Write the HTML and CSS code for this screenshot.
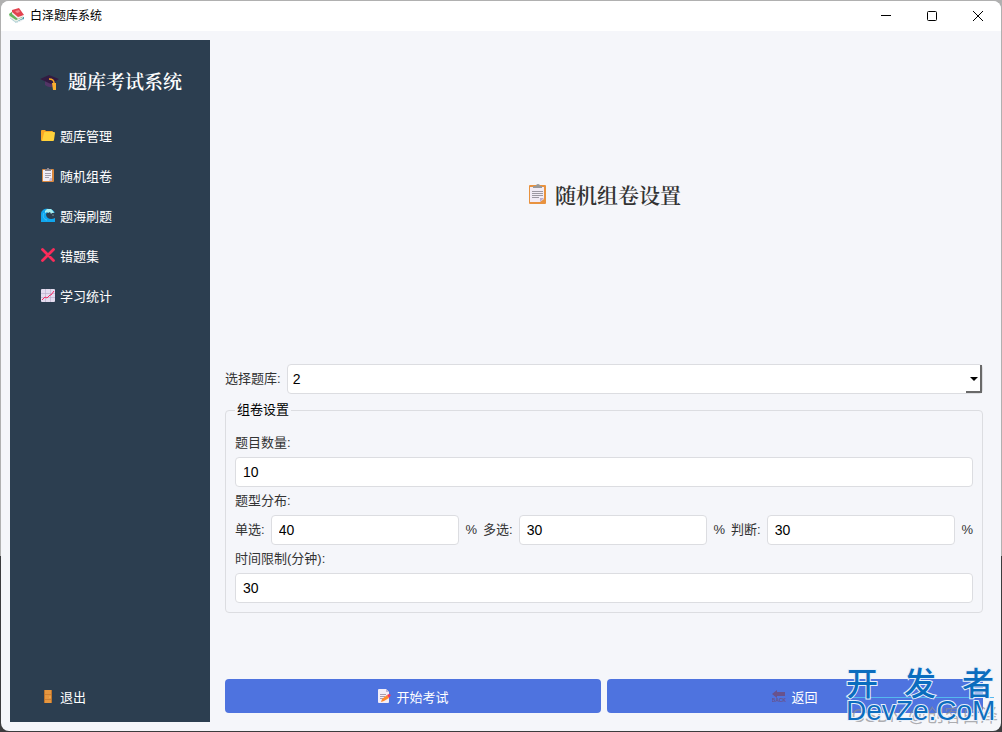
FILE: index.html
```html
<!DOCTYPE html>
<html lang="zh-CN">
<head>
    <meta charset="UTF-8">
    <meta name="viewport" content="width=device-width, initial-scale=1.0">
    <title>白泽题库系统</title>
    <link rel="stylesheet" href="styles.css">
</head>
<body>
    <div class="window">
        <header class="titlebar">
            <svg class="app-icon" viewBox="0 0 16 16">
                <path d="M1 10l6 5 8-4v-2L8 8z" fill="#4c9fae"/>
                <path d="M2 11l5 3 7-3-1 2-6 2z" fill="#e8eef0"/>
                <path d="M0 6l4-3 10 6-7 4-6-4z" fill="#63b45c"/>
                <path d="M1 8l6 4 7-3v1l-7 4-6-4z" fill="#e9efe6"/>
                <path d="M3 2l7-2 5 7-6 3-6-5z" fill="#e2434f"/>
                <path d="M3 4l6 5 6-2v1l-6 3-6-5z" fill="#f7e9ea"/>
                <path d="M6 3l4-1 1 2-3 1z" fill="#f4848c"/>
            </svg>
            <span class="titlebar-text">白泽题库系统</span>
            <div class="window-controls">
                <button type="button" aria-label="最小化">
                    <svg viewBox="0 0 12 12"><path d="M1 5.500h10" /></svg>
                </button>
                <button type="button" aria-label="最大化">
                    <svg viewBox="0 0 12 12"><rect x="1.5" y="1.5" width="9" height="9" rx="1" /></svg>
                </button>
                <button type="button" aria-label="关闭">
                    <svg viewBox="0 0 12 12"><path d="M1 1l10 10M11 1L1 11" /></svg>
                </button>
            </div>
        </header>

        <div class="layout">
            <aside class="sidebar">
                <h1>
                    <svg class="icon-large" viewBox="0 0 20 20">
                        <path d="M5 9v5c2 2 7 3 10 1V9z" fill="#533566"/>
                        <path d="M0 8l9-4 10 4-8 5z" fill="#321b41"/>
                        <path d="M9 8c3 0 5 1 5 4v5" fill="none" stroke="#f5a623" stroke-width="1.5"/>
                        <path d="M12 12h4v7h-3z" fill="#f9b02e"/>
                    </svg>
                    题库考试系统
                </h1>
                <nav>
                    <button type="button" class="nav-item">
                        <svg class="icon" viewBox="0 0 14 14">
                            <path d="M0 3q0-1 1-1h3l1 1h6q1 0 1 1v9H1q-1 0-1-1z" fill="#f9a825"/>
                            <path d="M3 5q0-1 1-1h9q1 0 1 1l-1 7q0 1-1 1H1z" fill="#ffd23b"/>
                        </svg>
                        题库管理
                    </button>
                    <button type="button" class="nav-item">
                        <svg class="icon" viewBox="0 0 14 14">
                            <rect x="1" y="1" width="12" height="13" rx="1" fill="#d9883f"/>
                            <path d="M2 2h9v8l-2 3H2z" fill="#f1ecf6"/>
                            <path d="M11 10v3H8l1-3z" fill="#c7bbd6"/>
                            <path d="M4 1h2V0h2v1h2v2H4z" fill="#8c8690"/>
                            <path d="M4 5.500h6M4 7.500h6M4 9.500h4" stroke="#908a99" stroke-width=".8"/>
                        </svg>
                        随机组卷
                    </button>
                    <button type="button" class="nav-item">
                        <svg class="icon" viewBox="0 0 14 14">
                            <path d="M0 14V6c0-4 4-6 8-5 3 0 5 2 6 4l-3-1C7 3 5 5 5 7c1 4 5 5 9 3v4z" fill="#10a6ee"/>
                            <path d="M4 3l2-2 4 0 2 2 1 2-2 0-1 1-1-2-2 1-1-1-2 1z" fill="#a8eeef"/>
                            <path d="M3 5c-2 3 0 7 3 7" fill="none" stroke="#46c3f5"/>
                            <circle cx="12" cy="7" r=".6" fill="#bcecf0"/>
                        </svg>
                        题海刷题
                    </button>
                    <button type="button" class="nav-item">
                        <svg class="icon" viewBox="0 0 14 14">
                            <path d="M1.500 1.500l11 11M12.500 1.500l-11 11" stroke="#fb2c5a" stroke-width="2.800" stroke-linecap="round"/>
                        </svg>
                        错题集
                    </button>
                    <button type="button" class="nav-item">
                        <svg class="icon" viewBox="0 0 14 14">
                            <rect width="14" height="13" y="1" rx="1" fill="#e4dcef"/>
                            <path d="M4.500 1v13M9.500 1v13M0 5.500h14M0 9.500h14" stroke="#b7aac6" stroke-width=".6"/>
                            <path d="M1 12l3-3 2 1 3-3 1 0 3-4" fill="none" stroke="#f52b62"/>
                        </svg>
                        学习统计
                    </button>
                </nav>
                <button type="button" class="nav-item nav-exit">
                    <svg class="icon" viewBox="0 0 14 14">
                        <rect x="3" y="1" width="8" height="13" fill="#bd742d"/>
                        <rect x="4" y="1" width="6" height="13" fill="#e6963f"/>
                        <path d="M4 5.500h6M4 10.500h6" stroke="#cf8032"/>
                        <circle cx="9" cy="8" r=".6" fill="#ffd17a"/>
                    </svg>
                    退出
                </button>
            </aside>

            <main class="content">
                <h2>
                    <svg class="icon-large" viewBox="0 0 20 20">
                        <rect x="2" y="1" width="17" height="19" rx="1" fill="#e8923f"/>
                        <path d="M3 3h14v12l-4 3H3z" fill="#f1ebf5"/>
                        <path d="M17 14l-4 4v-4z" fill="#bcaecb"/>
                        <path d="M6 2h3q0-2 2-2t2 2h2v2H6z" fill="#999"/>
                        <path d="M5 7.500h11M5 9.500h11M5 11.500h11M5 13.500h7" stroke="#9c98a2"/>
                    </svg>
                    随机组卷设置
                </h2>

                <form class="exam-form">
                    <div class="field-row">
                        <label for="bank">选择题库:</label>
                        <div class="select-box">
                            <select id="bank">
                                <option>2</option>
                            </select>
                        </div>
                    </div>

                    <fieldset>
                        <legend>组卷设置</legend>
                        <div class="fields">
                            <label for="count">题目数量:</label>
                            <input type="text" id="count" value="10">
                            <span class="field-title">题型分布:</span>
                            <div class="field-row">
                                <label for="single">单选:</label>
                                <input type="text" id="single" value="40">
                                <span>%</span>
                                <label for="multi">多选:</label>
                                <input type="text" id="multi" value="30">
                                <span>%</span>
                                <label for="judge">判断:</label>
                                <input type="text" id="judge" value="30">
                                <span>%</span>
                            </div>
                            <label for="limit">时间限制(分钟):</label>
                            <input type="text" id="limit" value="30">
                        </div>
                    </fieldset>

                    <div class="actions">
                        <button type="submit">
                            <svg class="icon" viewBox="0 0 14 14">
                                <path d="M1 1q0-1 1-1h7l3 3v10q0 1-1 1H2q-1 0-1-1z" fill="#f3edf7"/>
                                <path d="M9 0l3 3H9z" fill="#c5b6d3"/>
                                <path d="M3 5.500h6M3 7.500h5M3 9.500h3" stroke="#a79caf"/>
                                <path d="M5 10l5-4 2 3-5 3-3 1z" fill="#ff8a2b"/>
                                <path d="M10 6l2-1 2 1-2 3z" fill="#f3385f"/>
                            </svg>
                            开始考试
                        </button>
                        <button type="button">
                            <svg class="icon" viewBox="0 0 14 14">
                                <path d="M0 5l5-4v2h8v4H5v2z" fill="#69528c"/>
                                <text class="back-text" x="7" y="13">BACK</text>
                            </svg>
                            返回
                        </button>
                    </div>
                </form>
            </main>
        </div>
    </div>

    <div class="author-mark">CSDN @创客白泽</div>
    <div class="site-mark">
        <div class="site-name"><span>开</span><span>发</span><span>者</span></div>
        <div class="site-url">DevZe.CoM</div>
    </div>
</body>
</html>
```

FILE: styles.css
```css
*, *::before, *::after {
    box-sizing: border-box;
}

body {
    position: relative;
    display: flex;
    min-height: 100vh;
    margin: 0;
    padding: 1px;
    background: linear-gradient(#b0b0b0 76%, #3c3c3e 76%);
    color: #333;
    font-family: "Liberation Sans", "Noto Sans CJK SC", sans-serif;
    font-size: 13px;
    line-height: 16px;
}

button, input, select {
    font-family: inherit;
    font-size: 13px;
}

h1, h2 {
    display: flex;
    align-items: center;
    gap: 8px;
    margin: 0;
    font-family: "Noto Serif CJK SC", "Noto Sans CJK SC", serif;
    font-weight: 600;
    line-height: 24px;
}

.window {
    flex: 1;
    display: flex;
    flex-direction: column;
    background: #f5f6fa;
    border-radius: 8px;
    overflow: hidden;
}

/* Title bar */
.titlebar {
    display: flex;
    align-items: center;
    height: 30px;
    padding-left: 8px;
    background: #fff;
    color: #000;
    font-size: 12px;
}

.app-icon {
    width: 16px;
    height: 16px;
    margin-right: 5px;
}

.window-controls {
    display: flex;
    margin-left: auto;
}

.window-controls button {
    display: flex;
    align-items: center;
    justify-content: center;
    width: 46px;
    height: 28px;
    padding: 0;
    border: none;
    background: none;
}

.window-controls svg {
    width: 12px;
    height: 12px;
    fill: none;
    stroke: #000;
}

.layout {
    flex: 1;
    display: flex;
    gap: 15px;
    padding: 9px 18px 9px 9px;
}

/* Sidebar */
.sidebar {
    display: flex;
    flex-direction: column;
    flex: 0 0 200px;
    padding: 29px 10px 6px;
    background: #2c3e50;
    color: #fff;
}

.sidebar h1 {
    padding-left: 20px;
    margin-bottom: 22px;
    font-size: 19px;
}

.nav-item {
    display: flex;
    align-items: center;
    gap: 5px;
    width: 100%;
    height: 40px;
    padding: 0 21px;
    border: none;
    background: none;
    color: #fff;
    text-align: left;
    cursor: pointer;
}

.nav-item:hover {
    background: #34495e;
}

.nav-exit {
    margin-top: auto;
}

.icon {
    flex: none;
    width: 14px;
    height: 14px;
}

.icon-large {
    flex: none;
    width: 20px;
    height: 20px;
}

/* Exam settings */
.content {
    flex: 1;
    display: flex;
    flex-direction: column;
    min-width: 0;
    padding-bottom: 9px;
}

.content h2 {
    flex: 1;
    justify-content: center;
    margin-bottom: 16px;
    font-size: 21px;
}

.field-row {
    display: flex;
    align-items: center;
    gap: 6px;
}

input, select {
    width: 100%;
    min-width: 0;
    height: 30px;
    padding: 0 7px;
    border: 1px solid #dcdde1;
    border-radius: 4px;
    background: #fff;
    color: #000;
    font-size: 14px;
}

.field-row input {
    flex: 1;
}

.select-box {
    position: relative;
    flex: 1;
}

select {
    display: block;
    padding: 0 5px;
    appearance: none;
}

/* Drop-down button edge and arrow */
.select-box::before {
    content: "";
    position: absolute;
    top: 1px;
    right: 1px;
    width: 16px;
    height: 28px;
    border: solid #696969;
    border-width: 0 2px 2px 0;
    pointer-events: none;
}

.select-box::after {
    content: "";
    position: absolute;
    top: 13px;
    right: 5px;
    border: 4px solid transparent;
    border-top-color: #000;
    border-bottom: none;
    pointer-events: none;
}

fieldset {
    min-width: 0;
    margin: 8px 0 66px;
    padding: 17px 9px 9px;
    border: 1px solid #dcdde1;
    border-radius: 4px;
}

legend {
    padding: 0 2px;
    color: #000;
}

.fields {
    display: flex;
    flex-direction: column;
    gap: 6px;
}

.actions {
    display: grid;
    grid-template-columns: 1fr 1fr;
    gap: 6px;
}

.actions button {
    display: flex;
    align-items: center;
    justify-content: center;
    gap: 5px;
    height: 34px;
    border: none;
    border-radius: 4px;
    background: #4e73df;
    color: #fff;
    cursor: pointer;
}

.actions button:hover {
    background: #3f63cc;
}

.back-text {
    fill: #69528c;
    font-size: 5px;
    font-weight: bold;
    text-anchor: middle;
}

/* Watermarks */
.author-mark {
    position: absolute;
    right: 4px;
    bottom: 6px;
    color: rgba(140, 140, 145, 0.7);
    font-size: 18px;
    line-height: 20px;
    white-space: nowrap;
    pointer-events: none;
}

.site-mark {
    position: absolute;
    right: 8px;
    bottom: 8px;
    width: 148px;
    color: #0b6dbe;
    -webkit-text-stroke: 2px #e8f0fb;
    paint-order: stroke fill;
    pointer-events: none;
}

.site-name {
    display: flex;
    justify-content: space-between;
    border-bottom: 1px solid #55b8ee;
    font-size: 32px;
    font-weight: 500;
    line-height: 26px;
}

.site-url {
    font-size: 28px;
    line-height: 26px;
    white-space: nowrap;
}
```
